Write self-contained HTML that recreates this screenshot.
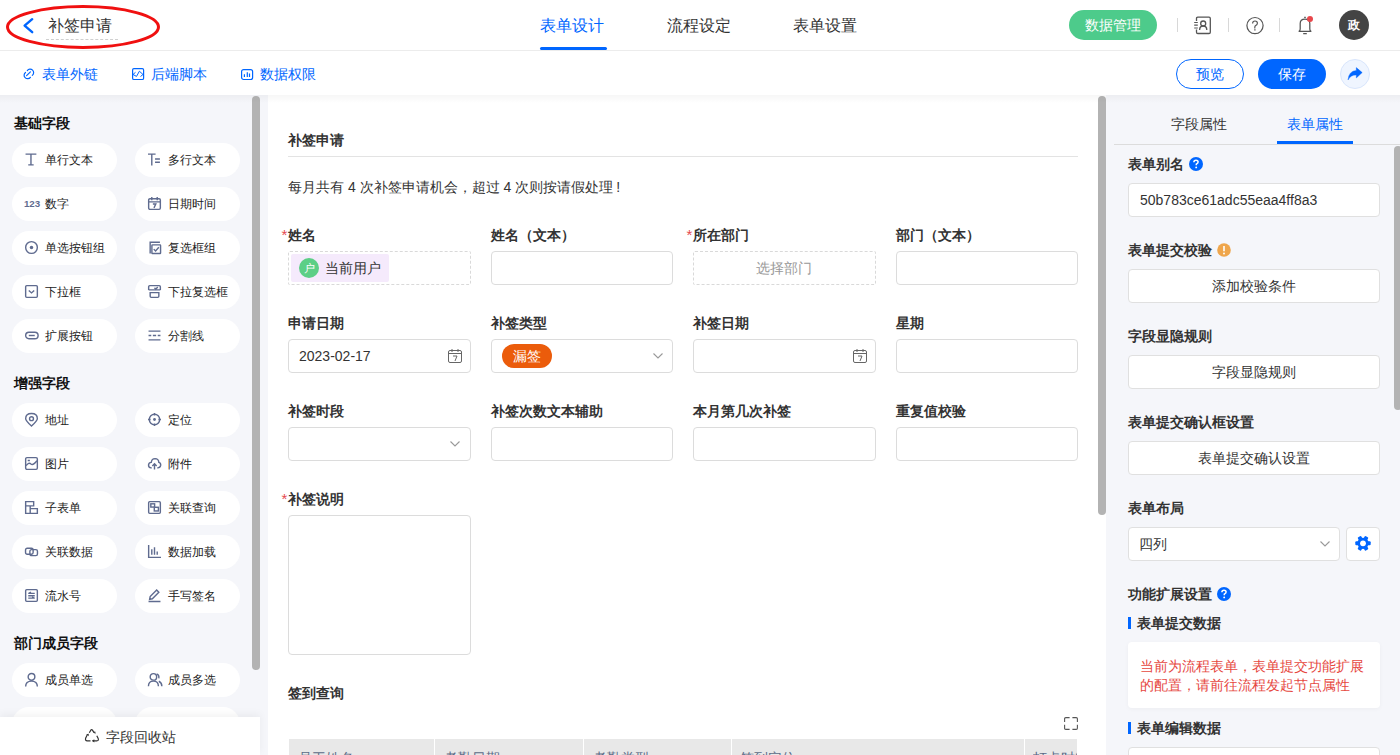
<!DOCTYPE html>
<html><head><meta charset="utf-8">
<style>
*{box-sizing:border-box;margin:0;padding:0}
html,body{width:1400px;height:755px;overflow:hidden;background:#fff;font-family:"Liberation Sans",sans-serif;color:#333}
.a{position:absolute}
.t{position:absolute;white-space:nowrap;line-height:20px;font-size:14px}
.b{font-weight:bold}
svg{position:absolute;overflow:visible}
/* header */
#hdr{left:0;top:0;width:1400px;height:51px;background:#fff;border-bottom:1px solid #ececec}
#tb{left:0;top:51px;width:1400px;height:44px;background:#fff}
.link{color:#0066ff}
.btn{position:absolute;height:30px;border-radius:15px;font-size:14px;line-height:28px;text-align:center}
/* left */
#left{left:0;top:95px;width:268px;height:660px;background:#f5f6fa}
.pill{position:absolute;width:105px;height:34px;border-radius:17px;background:#fff}
.pill .t{left:33px;top:7px;font-size:12px;color:#222}
.pill svg{left:16px;top:11px}
.sec{position:absolute;left:14px;font-size:14px;font-weight:bold;color:#111;line-height:20px;white-space:nowrap}
.thumb{position:absolute;background:#b3b3b3;border-radius:4px}
/* center */
#center{left:268px;top:95px;width:838px;height:660px;background:#fff}
.lab{position:absolute;font-size:14px;font-weight:bold;color:#333;line-height:20px;white-space:nowrap}
.req{color:#e5484d;font-weight:normal;position:absolute;left:-6.5px;top:0px;font-size:15px}
.inp{position:absolute;height:34px;border:1px solid #dcdcdc;border-radius:4px;background:#fff}
/* right */
#right{left:1106px;top:95px;width:294px;height:660px;background:#f5f6fa}
.rlab{position:absolute;left:1128px;font-size:14px;font-weight:bold;color:#333;line-height:20px;white-space:nowrap}
.rinp{position:absolute;left:1128px;width:252px;height:34px;border:1px solid #e0e0e0;border-radius:4px;background:#fff;font-size:14px;line-height:32px;text-align:center;color:#333}
</style></head><body>

<!-- HEADER -->
<div id="hdr" class="a"></div>
<svg width="10" height="16" style="left:23px;top:18px"><path d="M9.2 1.2 L1.6 7.6 L9.2 14.2" fill="none" stroke="#0066ff" stroke-width="2.4" stroke-linecap="round" stroke-linejoin="round"/></svg>
<div class="t" style="left:48px;top:16px;font-size:16px;line-height:20px;color:#333">补签申请</div>
<div class="a" style="left:46px;top:39px;width:72px;border-top:1px dashed #d0d0d0"></div>
<svg width="160" height="46" style="left:5px;top:4px"><ellipse cx="78" cy="23" rx="75.5" ry="20.4" fill="none" stroke="#f01010" stroke-width="3"/></svg>

<div class="t" style="left:540px;top:16px;font-size:16px;color:#0066ff">表单设计</div>
<div class="t" style="left:667px;top:16px;font-size:16px;color:#333">流程设定</div>
<div class="t" style="left:793px;top:16px;font-size:16px;color:#333">表单设置</div>
<div class="a" style="left:540px;top:47px;width:67px;height:3px;border-radius:2px;background:#0066ff"></div>

<div class="btn" style="left:1069px;top:10px;width:88px;background:#4dcb8b;color:#fff;line-height:30px">数据管理</div>
<div class="a" style="left:1177px;top:18px;width:1px;height:14px;background:#d8d8d8"></div>
<div class="a" style="left:1228px;top:18px;width:1px;height:14px;background:#d8d8d8"></div>
<div class="a" style="left:1279px;top:18px;width:1px;height:14px;background:#d8d8d8"></div>
<!-- contact icon -->
<svg width="19" height="19" style="left:1193px;top:16px"><path d="M3.5 5 V2.5 Q3.5 1.2 4.8 1.2 H16 Q17.3 1.2 17.3 2.5 V16.2 Q17.3 17.5 16 17.5 H4.8 Q3.5 17.5 3.5 16.2 V13.5" fill="none" stroke="#555" stroke-width="1.3"/><path d="M1.2 6.5 H4.8 M1.2 9.2 H4.8 M1.2 12 H4.8" stroke="#555" stroke-width="1.2"/><circle cx="10.2" cy="7.5" r="2.5" fill="none" stroke="#555" stroke-width="1.3"/><path d="M6.6 14 Q6.6 10 10.2 10 Q13.8 10 13.8 14" fill="none" stroke="#555" stroke-width="1.3"/></svg>
<!-- help -->
<svg width="18" height="18" style="left:1246px;top:17px"><circle cx="9" cy="8.6" r="8.1" fill="none" stroke="#555" stroke-width="1.2"/><path d="M6.6 6.4 Q6.6 4 9 4 Q11.4 4 11.4 6.2 Q11.4 7.6 9.4 8.8 Q8.8 9.3 8.8 10.5 V11.6" fill="none" stroke="#555" stroke-width="1.15"/><path d="M8.2 12.9 H9.6" stroke="#555" stroke-width="1.2"/></svg>
<!-- bell -->
<svg width="16" height="19" style="left:1298px;top:16px"><path d="M6.2 1.4 H7.8 M0.6 15.3 H13.4 M1 15.3 Q2.2 14.6 2.2 13 V7.6 Q2.2 3.2 7 3.2 Q11.8 3.2 11.8 7.6 V13 Q11.8 14.6 13 15.3 M5.2 17.6 H8.8" fill="none" stroke="#555" stroke-width="1.25"/><circle cx="12" cy="2.9" r="3" fill="#e8474b"/></svg>
<div class="a" style="left:1339px;top:10px;width:30px;height:30px;border-radius:15px;background:#444;color:#fff;font-size:12px;font-weight:bold;line-height:31px;text-align:center">政</div>

<!-- TOOLBAR -->
<div id="tb" class="a"></div>
<svg width="13" height="13" style="left:22px;top:67px"><path d="M5.3 3.6 A3.5 3.5 0 1 1 10.3 8.4 M8.4 10.3 A3.5 3.5 0 1 1 3.5 5.4 M4.6 8.6 L8.4 4.9" fill="none" stroke="#0066ff" stroke-width="1.2" stroke-linecap="round"/></svg>
<div class="t link" style="left:42px;top:64px">表单外链</div>
<svg width="13" height="13" style="left:132px;top:68px"><rect x="0.6" y="0.6" width="11" height="10.9" rx="1.3" fill="none" stroke="#0066ff" stroke-width="1.2"/><path d="M3.5 4.3 L1 6.5 L4.5 8.4 L7.4 3.2 L11 6.5 L8.5 8.5" fill="none" stroke="#0066ff" stroke-width="1"/></svg>
<div class="t link" style="left:151px;top:64px">后端脚本</div>
<svg width="13" height="13" style="left:241px;top:69px"><rect x="0.6" y="0.6" width="11" height="9.9" rx="2" fill="none" stroke="#0066ff" stroke-width="1.2"/><path d="M3.4 5.2V8M6.3 3.2V8M8.5 4.5V8" fill="none" stroke="#0066ff" stroke-width="1.2"/></svg>
<div class="t link" style="left:260px;top:64px">数据权限</div>

<div class="btn" style="left:1176px;top:59px;width:68px;border:1px solid #0066ff;color:#0066ff;background:#fff">预览</div>
<div class="btn" style="left:1258px;top:59px;width:68px;background:#0066ff;color:#fff;line-height:30px">保存</div>
<div class="a" style="left:1340px;top:59px;width:30px;height:30px;border-radius:15px;background:#eff5ff;border:1px solid #d9e6fc"></div>
<svg width="16" height="14" style="left:1347px;top:67px"><path d="M15.2 5.6 L9.3 0.6 V3.4 Q1.8 3.9 1 13 Q3.6 7.8 9.3 7.9 V10.9 Z" fill="#0066ff" stroke="#0066ff" stroke-width="0.4" stroke-linejoin="round"/></svg>

<!-- LEFT PANEL -->
<div id="left" class="a"></div>
<div class="sec" style="top:113px">基础字段</div>
<div class="sec" style="top:373px">增强字段</div>
<div class="sec" style="top:633px">部门成员字段</div>
<div class="pill" style="left:12px;top:143px"><svg width="13" height="13" viewBox="0 0 12 12" style="left:13px;top:10px"><path d="M0.5 1H10.5M5.5 1V11M3 11H8" fill="none" stroke="#5f6b8f" stroke-width="1.3"/></svg><div class="t">单行文本</div></div>
<div class="pill" style="left:135px;top:143px"><svg width="13" height="13" viewBox="0 0 12 12" style="left:13px;top:10px"><path d="M0 1H7M3.5 1V11.5M6.5 5.5H11M6.5 8.5H11" fill="none" stroke="#5f6b8f" stroke-width="1.3"/></svg><div class="t">多行文本</div></div>
<div class="pill" style="left:12px;top:187px"><svg width="13" height="13" viewBox="0 0 12 12" style="left:13px;top:10px"><text x="-1" y="9.5" font-size="9" font-weight="bold" fill="#5f6b8f" font-family="Liberation Sans">123</text></svg><div class="t">数字</div></div>
<div class="pill" style="left:135px;top:187px"><svg width="13" height="13" viewBox="0 0 12 12" style="left:13px;top:10px"><rect x="0.6" y="1.6" width="10.8" height="9.8" rx="1.2" fill="none" stroke="#5f6b8f" stroke-width="1.3"/><path d="M0.6 4.5H11.4M3.5 0V3M8.5 0V3M4.5 6.5H7.2L5.5 10" fill="none" stroke="#5f6b8f" stroke-width="1.3" stroke-width="1"/></svg><div class="t">日期时间</div></div>
<div class="pill" style="left:12px;top:231px"><svg width="13" height="13" viewBox="0 0 12 12" style="left:13px;top:10px"><circle cx="6" cy="6" r="5.4" fill="none" stroke="#5f6b8f" stroke-width="1.3"/><circle cx="6" cy="6" r="1.6" fill="#5f6b8f"/></svg><div class="t">单选按钮组</div></div>
<div class="pill" style="left:135px;top:231px"><svg width="13" height="13" viewBox="0 0 12 12" style="left:13px;top:10px"><path d="M2 11.5V1.2H11" fill="none" stroke="#5f6b8f" stroke-width="1.3"/><rect x="3.6" y="3.6" width="8" height="8" rx="0.5" fill="none" stroke="#5f6b8f" stroke-width="1.3"/><path d="M5.3 7.5L7 9.2L10 5.8" fill="none" stroke="#5f6b8f" stroke-width="1.3"/></svg><div class="t">复选框组</div></div>
<div class="pill" style="left:12px;top:275px"><svg width="13" height="13" viewBox="0 0 12 12" style="left:13px;top:10px"><rect x="0.6" y="0.6" width="10.8" height="10.8" rx="1" fill="none" stroke="#5f6b8f" stroke-width="1.3"/><path d="M3.5 5L6 7.3L8.5 5" fill="none" stroke="#5f6b8f" stroke-width="1.3"/></svg><div class="t">下拉框</div></div>
<div class="pill" style="left:135px;top:275px"><svg width="13" height="13" viewBox="0 0 12 12" style="left:13px;top:10px"><path d="M0.6 4.5V1.6Q0.6 0.6 1.6 0.6H10.4Q11.4 0.6 11.4 1.6V4.5M0.6 4.5H11.4M2 7H10V10.4Q10 11.4 9 11.4H3Q2 11.4 2 10.4Z" fill="none" stroke="#5f6b8f" stroke-width="1.3"/><path d="M6 2.5L7.2 3.8L9 1.8" fill="none" stroke="#5f6b8f" stroke-width="1.3" stroke-width="1"/></svg><div class="t">下拉复选框</div></div>
<div class="pill" style="left:12px;top:319px"><svg width="13" height="13" viewBox="0 0 12 12" style="left:13px;top:10px"><rect x="0.6" y="3" width="11.5" height="6" rx="3" fill="none" stroke="#5f6b8f" stroke-width="1.3"/><path d="M3.5 6H9" fill="none" stroke="#5f6b8f" stroke-width="1.3"/></svg><div class="t">扩展按钮</div></div>
<div class="pill" style="left:135px;top:319px"><svg width="13" height="13" viewBox="0 0 12 12" style="left:13px;top:10px"><path d="M0.5 2H11.5M0.5 10H11.5M0.5 6H3M4.5 6H7.5M9 6H11.5" fill="none" stroke="#5f6b8f" stroke-width="1.3"/></svg><div class="t">分割线</div></div>
<div class="pill" style="left:12px;top:403px"><svg width="13" height="13" viewBox="0 0 12 12" style="left:13px;top:10px"><path d="M6 12Q0.6 6.8 0.6 5.2Q0.6 0.5 6 0.5Q11.4 0.5 11.4 5.2Q11.4 6.8 6 12Z" fill="none" stroke="#5f6b8f" stroke-width="1.3"/><circle cx="6" cy="5.2" r="1.8" fill="none" stroke="#5f6b8f" stroke-width="1.3"/></svg><div class="t">地址</div></div>
<div class="pill" style="left:135px;top:403px"><svg width="13" height="13" viewBox="0 0 12 12" style="left:13px;top:10px"><circle cx="6" cy="6" r="4.8" fill="none" stroke="#5f6b8f" stroke-width="1.3"/><circle cx="6" cy="6" r="1.3" fill="#5f6b8f"/><path d="M6 0V2.4M6 9.6V12M0 6H2.4M9.6 6H12" fill="none" stroke="#5f6b8f" stroke-width="1.3"/></svg><div class="t">定位</div></div>
<div class="pill" style="left:12px;top:447px"><svg width="13" height="13" viewBox="0 0 12 12" style="left:13px;top:10px"><rect x="0.6" y="0.6" width="10.8" height="10.8" rx="1.2" fill="none" stroke="#5f6b8f" stroke-width="1.3"/><path d="M1 8Q3.5 4.5 5.5 6.5Q7.5 8 11 3.5M2.5 3.2H4.5" fill="none" stroke="#5f6b8f" stroke-width="1.3"/></svg><div class="t">图片</div></div>
<div class="pill" style="left:135px;top:447px"><svg width="13" height="13" viewBox="0 0 12 12" style="left:13px;top:10px"><path d="M3.5 10H2.8Q0.3 9.8 0.5 7.3Q0.8 5 3 5Q3.5 1.5 6.5 1.5Q9.8 1.7 10 5Q12 5.5 11.7 7.8Q11.3 9.9 9 10H8.5M6 11.5V6.5M4 8.3L6 6.3L8 8.3" fill="none" stroke="#5f6b8f" stroke-width="1.3"/></svg><div class="t">附件</div></div>
<div class="pill" style="left:12px;top:491px"><svg width="13" height="13" viewBox="0 0 12 12" style="left:13px;top:10px"><path d="M0.6 0.6H8V4.5H0.6ZM0.6 4.5V11.4H4.8V4.5M4.8 7H11.4V11.4H4.8" fill="none" stroke="#5f6b8f" stroke-width="1.3"/></svg><div class="t">子表单</div></div>
<div class="pill" style="left:135px;top:491px"><svg width="13" height="13" viewBox="0 0 12 12" style="left:13px;top:10px"><rect x="0.6" y="0.6" width="10.8" height="10.8" rx="1" fill="none" stroke="#5f6b8f" stroke-width="1.3"/><rect x="2.6" y="2.6" width="3.5" height="3" fill="none" stroke="#5f6b8f" stroke-width="1.3" stroke-width="1"/><rect x="5.8" y="5.8" width="3.8" height="3.4" fill="none" stroke="#5f6b8f" stroke-width="1.3" stroke-width="1"/></svg><div class="t">关联查询</div></div>
<div class="pill" style="left:12px;top:535px"><svg width="13" height="13" viewBox="0 0 12 12" style="left:13px;top:10px"><rect x="0.5" y="3" width="7" height="5.5" rx="1.5" fill="none" stroke="#5f6b8f" stroke-width="1.3"/><rect x="4.5" y="4.3" width="7" height="5.5" rx="1.5" fill="none" stroke="#5f6b8f" stroke-width="1.3"/></svg><div class="t">关联数据</div></div>
<div class="pill" style="left:135px;top:535px"><svg width="13" height="13" viewBox="0 0 12 12" style="left:13px;top:10px"><path d="M0.6 0V11.4H12M3.5 4V9M6 2V9M8.5 6V9" fill="none" stroke="#5f6b8f" stroke-width="1.3"/></svg><div class="t">数据加载</div></div>
<div class="pill" style="left:12px;top:579px"><svg width="13" height="13" viewBox="0 0 12 12" style="left:13px;top:10px"><rect x="0.6" y="0.6" width="10.8" height="10.8" rx="1" fill="none" stroke="#5f6b8f" stroke-width="1.3"/><path d="M3 4H9M3 6.2H9M3 8.4H9M5.5 2.8L3.5 4M6.5 7.5L8.8 8.5" fill="none" stroke="#5f6b8f" stroke-width="1.3" stroke-width="1"/></svg><div class="t">流水号</div></div>
<div class="pill" style="left:135px;top:579px"><svg width="13" height="13" viewBox="0 0 12 12" style="left:13px;top:10px"><path d="M0.5 11.5H11.5M1.5 9.5L2 7L8 1L10 3L4 9Z" fill="none" stroke="#5f6b8f" stroke-width="1.3"/></svg><div class="t">手写签名</div></div>
<div class="pill" style="left:12px;top:663px"><svg width="13" height="13" viewBox="0 0 12 12" style="left:13px;top:10px"><circle cx="6" cy="3.6" r="3.1" fill="none" stroke="#5f6b8f" stroke-width="1.3"/><path d="M0.6 12.5Q0.6 7.5 6 7.5Q11.4 7.5 11.4 12.5" fill="none" stroke="#5f6b8f" stroke-width="1.3"/></svg><div class="t">成员单选</div></div>
<div class="pill" style="left:135px;top:663px"><svg width="13" height="13" viewBox="0 0 12 12" style="left:13px;top:10px"><circle cx="5" cy="3.6" r="3" fill="none" stroke="#5f6b8f" stroke-width="1.3"/><path d="M0.4 12.3Q0.4 7.5 5 7.5Q9.6 7.5 9.6 12.3M8 0.9Q10.5 1.5 10 5M10 7.6Q12.8 8.8 12.8 12.3" fill="none" stroke="#5f6b8f" stroke-width="1.3"/></svg><div class="t">成员多选</div></div>
<div class="pill" style="left:12px;top:707px"></div>
<div class="pill" style="left:135px;top:707px"></div>
<div class="thumb" style="left:252px;top:96px;width:8px;height:574px"></div>
<div class="a" style="left:0;top:717px;width:260px;height:38px;background:#fff;box-shadow:0 -3px 8px rgba(0,0,0,0.05)"></div>
<svg width="15" height="14" style="left:85px;top:729px"><path d="M2.2 6 L0.6 9.3 Q0 11.8 2.2 11.8 H5.5 M7.5 11.8 H11.8 Q14 11.8 13.2 9.6 L11.8 6.8 M4.3 3.8 L5.8 1.2 Q6.6 0 7.5 1.2 L9 3.8" fill="none" stroke="#333" stroke-width="1.2"/><path d="M8.3 2.6 L10.3 5.2 L10.5 2.8 Z M1.2 5.2 L3.8 4.8 L3.6 7.3 Z M9.3 10.2 L7 11.8 L9.3 13.4 Z" fill="#333"/></svg>
<div class="t" style="left:106px;top:727px;color:#333">字段回收站</div>

<!-- CENTER -->
<div id="center" class="a"></div>
<!-- form title -->
<div class="lab" style="left:288px;top:130px;color:#333">补签申请</div>
<div class="a" style="left:288px;top:156px;width:790px;height:1px;background:#e3e3e3"></div>
<div class="t" style="left:288px;top:177px;color:#333">每月共有 4 次补签申请机会，超过 4 次则按请假处理<span style="margin-left:3px">!</span></div>

<!-- row 1 -->
<div class="lab" style="left:288px;top:225px"><span class="req">*</span>姓名</div>
<div class="lab" style="left:491px;top:225px">姓名（文本）</div>
<div class="lab" style="left:693px;top:225px"><span class="req">*</span>所在部门</div>
<div class="lab" style="left:896px;top:225px">部门（文本）</div>
<div class="a" style="left:288px;top:251px;width:183px;height:34px;border:1px dashed #d9d9d9;border-radius:2px"></div>
<div class="a" style="left:291px;top:254px;width:98px;height:28px;background:#f5eafc;border-radius:2px"></div>
<div class="a" style="left:299px;top:258px;width:20px;height:20px;border-radius:10px;background:#5ccf86;color:#fff;font-size:11px;line-height:20px;text-align:center">户</div>
<div class="t" style="left:325px;top:258px;color:#333">当前用户</div>
<div class="inp" style="left:491px;top:251px;width:182px"></div>
<div class="a" style="left:693px;top:251px;width:183px;height:34px;border:1px dashed #d9d9d9;border-radius:2px"></div>
<div class="t" style="left:756px;top:258px;color:#999">选择部门</div>
<div class="inp" style="left:896px;top:251px;width:182px"></div>

<!-- row 2 -->
<div class="lab" style="left:288px;top:313px">申请日期</div>
<div class="lab" style="left:491px;top:313px">补签类型</div>
<div class="lab" style="left:693px;top:313px">补签日期</div>
<div class="lab" style="left:896px;top:313px">星期</div>
<div class="inp" style="left:288px;top:339px;width:183px"></div>
<div class="t" style="left:299px;top:346px;color:#333">2023-02-17</div>
<svg class="calico" width="14" height="14" style="left:448px;top:349px"><rect x="0.5" y="1.5" width="13" height="12" rx="1.5" fill="none" stroke="#666" stroke-width="1"/><path d="M0.5 4.5H13.5M4 0V3M10 0V3" stroke="#666" stroke-width="1" fill="none"/><path d="M5 7H9L7 12" stroke="#666" stroke-width="1" fill="none"/></svg>
<div class="inp" style="left:491px;top:339px;width:182px"></div>
<div class="a" style="left:502px;top:344px;width:50px;height:24px;border-radius:12px;background:#eb5c0b;color:#fff;font-size:14px;line-height:24px;text-align:center">漏签</div>
<svg width="10" height="6" style="left:653px;top:353px"><path d="M0.5 0.5L5 5L9.5 0.5" fill="none" stroke="#999" stroke-width="1.1"/></svg>
<div class="inp" style="left:693px;top:339px;width:183px"></div>
<svg width="14" height="14" style="left:853px;top:349px"><rect x="0.5" y="1.5" width="13" height="12" rx="1.5" fill="none" stroke="#666" stroke-width="1"/><path d="M0.5 4.5H13.5M4 0V3M10 0V3" stroke="#666" stroke-width="1" fill="none"/><path d="M5 7H9L7 12" stroke="#666" stroke-width="1" fill="none"/></svg>
<div class="inp" style="left:896px;top:339px;width:182px"></div>

<!-- row 3 -->
<div class="lab" style="left:288px;top:401px">补签时段</div>
<div class="lab" style="left:491px;top:401px">补签次数文本辅助</div>
<div class="lab" style="left:693px;top:401px">本月第几次补签</div>
<div class="lab" style="left:896px;top:401px">重复值校验</div>
<div class="inp" style="left:288px;top:427px;width:183px"></div>
<svg width="10" height="6" style="left:450px;top:441px"><path d="M0.5 0.5L5 5L9.5 0.5" fill="none" stroke="#999" stroke-width="1.1"/></svg>
<div class="inp" style="left:491px;top:427px;width:182px"></div>
<div class="inp" style="left:693px;top:427px;width:183px"></div>
<div class="inp" style="left:896px;top:427px;width:182px"></div>

<!-- row 4 -->
<div class="lab" style="left:288px;top:489px"><span class="req">*</span>补签说明</div>
<div class="inp" style="left:288px;top:515px;width:183px;height:140px"></div>

<!-- sign query -->
<div class="lab" style="left:288px;top:683px">签到查询</div>
<svg width="14" height="14" style="left:1064px;top:717px"><path d="M0.6 5 V1.8 Q0.6 0.6 1.8 0.6 H5.6 M8.4 0.6 H12.2 Q13.4 0.6 13.4 1.8 V5 M13.4 7.8 V11.2 Q13.4 12.4 12.2 12.4 H8.4 M5.6 12.4 H1.8 Q0.6 12.4 0.6 11.2 V7.8" fill="none" stroke="#555" stroke-width="1.1"/></svg>
<div class="a" style="left:289px;top:739px;width:788px;height:16px;background:#e8e8e8"></div>
<div class="a" style="left:434px;top:739px;width:1px;height:16px;background:#fff"></div>
<div class="a" style="left:583px;top:739px;width:1px;height:16px;background:#fff"></div>
<div class="a" style="left:731px;top:739px;width:1px;height:16px;background:#fff"></div>
<div class="a" style="left:1024px;top:739px;width:1px;height:16px;background:#fff"></div>
<div class="t" style="left:298px;top:748px;color:#5b6b87">员工姓名</div>
<div class="t" style="left:444px;top:748px;color:#5b6b87">考勤日期</div>
<div class="t" style="left:593px;top:748px;color:#5b6b87">考勤类型</div>
<div class="t" style="left:740px;top:748px;color:#5b6b87">签到定位</div>
<div class="a" style="left:1033px;top:739px;width:44px;height:16px;overflow:hidden"><div class="t" style="left:0;top:9px;color:#5b6b87">打卡时间</div></div>


<div class="thumb" style="left:1098px;top:96px;width:8px;height:419px"></div>

<!-- RIGHT -->
<div id="right" class="a"></div>
<!-- right tabs -->
<div class="t" style="left:1171px;top:114px;color:#333">字段属性</div>
<div class="t" style="left:1287px;top:114px;color:#0066ff">表单属性</div>
<div class="a" style="left:1114px;top:144px;width:286px;height:1px;background:#dcdcdc"></div>
<div class="a" style="left:1277px;top:141px;width:76px;height:3px;background:#0066ff"></div>
<div class="thumb" style="left:1394px;top:146px;width:8px;height:264px"></div>

<div class="rlab" style="top:154px">表单别名</div>
<svg width="14" height="14" style="left:1189px;top:157px"><circle cx="7" cy="7" r="7" fill="#0066ff"/><path d="M4.9 5.3Q4.9 3.2 7 3.2Q9.1 3.2 9.1 5.1Q9.1 6.3 7.3 7.2V8.3" fill="none" stroke="#fff" stroke-width="1.5"/><circle cx="7.2" cy="10.4" r="0.95" fill="#fff"/></svg>
<div class="rinp" style="top:183px;text-align:left;padding-left:11px">50b783ce61adc55eaa4ff8a3</div>

<div class="rlab" style="top:240px">表单提交校验</div>
<svg width="14" height="14" style="left:1217px;top:243px"><circle cx="7" cy="7" r="6.8" fill="#efa64c"/><path d="M7 3V8.3" stroke="#fff" stroke-width="1.6"/><circle cx="7" cy="10.5" r="0.95" fill="#fff"/></svg>
<div class="rinp" style="top:269px">添加校验条件</div>

<div class="rlab" style="top:326px">字段显隐规则</div>
<div class="rinp" style="top:355px">字段显隐规则</div>

<div class="rlab" style="top:412px">表单提交确认框设置</div>
<div class="rinp" style="top:441px">表单提交确认设置</div>

<div class="rlab" style="top:498px">表单布局</div>
<div class="rinp" style="top:527px;width:212px;text-align:left;padding-left:10px">四列</div>
<svg width="10" height="6" style="left:1320px;top:541px"><path d="M0.5 0.5L5 5L9.5 0.5" fill="none" stroke="#999" stroke-width="1.1"/></svg>
<div class="rinp" style="top:527px;left:1346px;width:34px"></div>
<svg width="16" height="14" style="left:1355px;top:537px"><g transform="translate(8,6.3)"><circle r="5.6" fill="#0066ff"/><rect x="-2" y="-7.7" width="4" height="4" rx="1" transform="rotate(30)" fill="#0066ff"/><rect x="-2" y="-7.7" width="4" height="4" rx="1" transform="rotate(90)" fill="#0066ff"/><rect x="-2" y="-7.7" width="4" height="4" rx="1" transform="rotate(150)" fill="#0066ff"/><rect x="-2" y="-7.7" width="4" height="4" rx="1" transform="rotate(210)" fill="#0066ff"/><rect x="-2" y="-7.7" width="4" height="4" rx="1" transform="rotate(270)" fill="#0066ff"/><rect x="-2" y="-7.7" width="4" height="4" rx="1" transform="rotate(330)" fill="#0066ff"/><circle r="2.9" fill="#fff"/></g></svg>

<div class="rlab" style="top:584px">功能扩展设置</div>
<svg width="14" height="14" style="left:1217px;top:587px"><circle cx="7" cy="7" r="7" fill="#0066ff"/><path d="M4.9 5.3Q4.9 3.2 7 3.2Q9.1 3.2 9.1 5.1Q9.1 6.3 7.3 7.2V8.3" fill="none" stroke="#fff" stroke-width="1.5"/><circle cx="7.2" cy="10.4" r="0.95" fill="#fff"/></svg>

<div class="a" style="left:1128px;top:617px;width:3px;height:12px;background:#0066ff"></div>
<div class="rlab" style="top:613px;left:1137px">表单提交数据</div>
<div class="a" style="left:1128px;top:642px;width:252px;height:66px;background:#fff;border-radius:4px;box-shadow:0 1px 4px rgba(0,0,0,0.04)"></div>
<div class="t" style="left:1140px;top:657px;color:#e6483f;line-height:19px">当前为流程表单，表单提交功能扩展<br>的配置，请前往流程发起节点属性</div>

<div class="a" style="left:1128px;top:722px;width:3px;height:12px;background:#0066ff"></div>
<div class="rlab" style="top:718px;left:1137px">表单编辑数据</div>
<div class="rinp" style="top:747px"></div>



<div class="a" style="left:0;top:95px;width:1400px;height:8px;background:linear-gradient(rgba(0,0,0,0.035),rgba(0,0,0,0))"></div>
</body></html>
